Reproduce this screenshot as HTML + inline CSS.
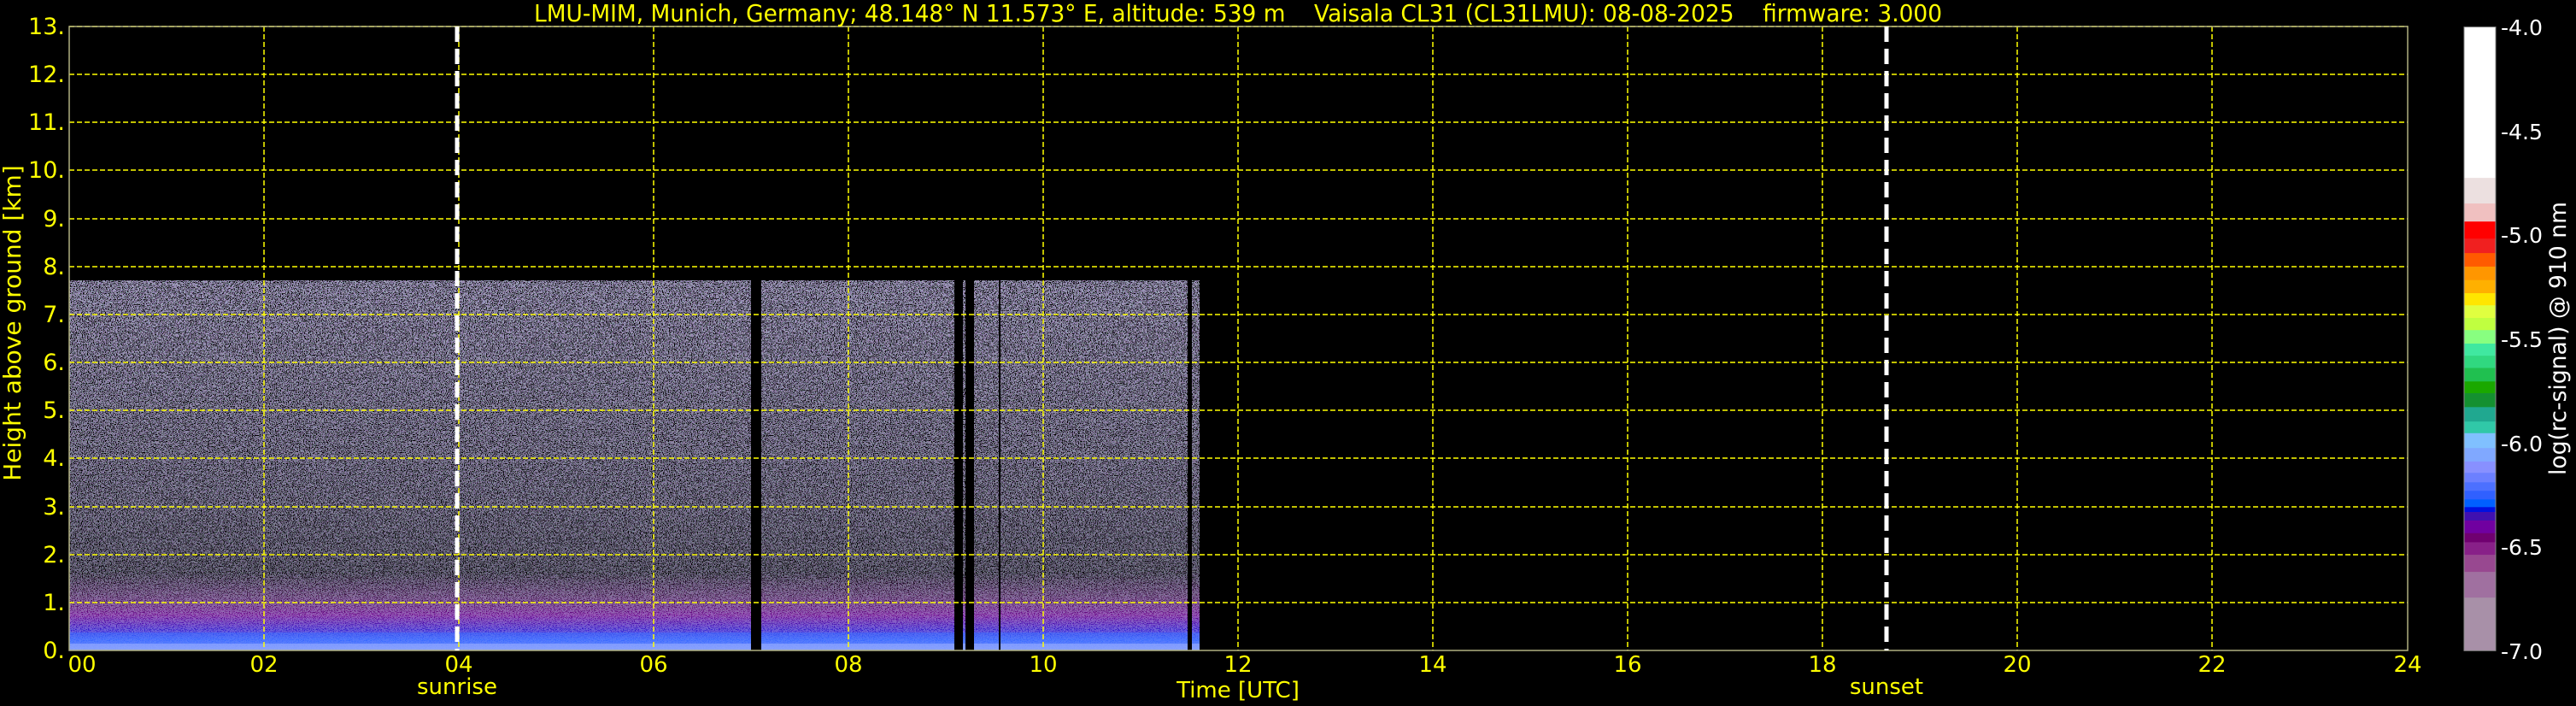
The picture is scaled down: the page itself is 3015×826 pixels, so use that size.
<!DOCTYPE html>
<html><head><meta charset="utf-8"><style>
html,body{margin:0;padding:0;background:#000;width:3015px;height:826px;overflow:hidden}
svg{display:block}
text{font-family:"DejaVu Sans","Liberation Sans",sans-serif}
</style></head><body>
<svg width="3015" height="826" viewBox="0 0 3015 826" xmlns="http://www.w3.org/2000/svg">
<defs>
<filter id="nz" x="0" y="0" width="100%" height="100%" filterUnits="objectBoundingBox">
<feTurbulence type="fractalNoise" baseFrequency="0.85" numOctaves="1" seed="7"/>
<feComponentTransfer>
<feFuncR type="discrete" tableValues="0.2 0.45 0.6 0.65 0.8 1"/>
<feFuncG type="discrete" tableValues="0.15 0.35 0.45 0.7 0.9 1"/>
<feFuncB type="discrete" tableValues="0.4 0.7 0.85 1 0.8 1"/>
<feFuncA type="discrete" tableValues="0 0 0 1 1 0 0"/>
</feComponentTransfer>
</filter>
<linearGradient id="dens" x1="0" y1="328" x2="0" y2="761" gradientUnits="userSpaceOnUse">
<stop offset="0" stop-color="#fff" stop-opacity="0.75"/>
<stop offset="0.6" stop-color="#fff" stop-opacity="0.62"/>
<stop offset="0.85" stop-color="#fff" stop-opacity="0.5"/>
<stop offset="1" stop-color="#fff" stop-opacity="0.3"/>
</linearGradient>
<mask id="m" maskUnits="userSpaceOnUse" x="0" y="0" width="3015" height="826"><rect x="81" y="328" width="1323" height="433" fill="url(#dens)"/></mask>
<linearGradient id="bl" x1="0" y1="670" x2="0" y2="761" gradientUnits="userSpaceOnUse">
<stop offset="0" stop-color="#7a2a8a" stop-opacity="0"/>
<stop offset="0.3" stop-color="#7a2a8a" stop-opacity="0.5"/>
<stop offset="0.55" stop-color="#6a0a8a"/>
<stop offset="0.75" stop-color="#3020d0"/>
<stop offset="0.87" stop-color="#3a6aff"/>
<stop offset="1" stop-color="#90a8ff"/>
</linearGradient>
</defs>

<rect x="81" y="670" width="1323" height="91" fill="url(#bl)"/>
<rect x="81" y="328" width="1323" height="433" filter="url(#nz)" mask="url(#m)"/>
<rect x="81" y="740" width="1323" height="21" fill="#3a6aff" opacity="0.5"/>
<rect x="81" y="753" width="1323" height="8" fill="#a8b8ff" opacity="0.5"/>
<g fill="#000">
<rect x="879" y="328" width="12" height="433"/>
<rect x="1117" y="328" width="10" height="433"/>
<rect x="1130" y="328" width="10" height="433"/>
<rect x="1169" y="328" width="2" height="433"/>
<rect x="1390" y="328" width="5" height="433"/>
</g>

<g stroke="#ffff00" stroke-width="1.5" stroke-dasharray="6 3" fill="none">
<path d="M81 705H2818M81 649H2818M81 593H2818M81 536H2818M81 480H2818M81 424H2818M81 368H2818M81 312H2818M81 256H2818M81 199H2818M81 143H2818M81 87H2818M81 31H2818"/>
<path d="M309 31V761M537 31V761M765 31V761M993 31V761M1221 31V761M1449 31V761M1677 31V761M1905 31V761M2133 31V761M2361 31V761M2589 31V761"/>
</g>
<rect x="81" y="31" width="2737" height="730" fill="none" stroke="#b0b080" stroke-width="1.5"/>

<g stroke="#fff" stroke-width="5" stroke-dasharray="18 8">
<path d="M535 31V761M2208 31V761"/>
</g>

<text x="625" y="25" font-size="28" fill="#ffff00" textLength="1648" lengthAdjust="spacingAndGlyphs" xml:space="preserve" style="white-space:pre">LMU-MIM, Munich, Germany; 48.148° N 11.573° E, altitude: 539 m    Vaisala CL31 (CL31LMU): 08-08-2025    firmware: 3.000</text>

<g font-size="27" fill="#ffff00" text-anchor="end">
<text x="76" y="770">0.</text><text x="76" y="714">1.</text><text x="76" y="658">2.</text><text x="76" y="602">3.</text><text x="76" y="545">4.</text><text x="76" y="489">5.</text><text x="76" y="433">6.</text><text x="76" y="377">7.</text><text x="76" y="321">8.</text><text x="76" y="265">9.</text><text x="76" y="208">10.</text><text x="76" y="152">11.</text><text x="76" y="96">12.</text><text x="76" y="40">13.</text>
</g>
<text transform="translate(24,378) rotate(-90)" font-size="28" fill="#ffff00" text-anchor="middle">Height above ground [km]</text>

<g font-size="26" fill="#ffff00" text-anchor="middle">
<text x="96" y="786">00</text><text x="309" y="786">02</text><text x="537" y="786">04</text><text x="765" y="786">06</text><text x="993" y="786">08</text><text x="1221" y="786">10</text><text x="1449" y="786">12</text><text x="1677" y="786">14</text><text x="1905" y="786">16</text><text x="2133" y="786">18</text><text x="2361" y="786">20</text><text x="2589" y="786">22</text><text x="2818" y="786">24</text>
<text x="535" y="812">sunrise</text>
<text x="1449" y="816">Time [UTC]</text>
<text x="2208" y="812">sunset</text>
</g>

<g>
<rect x="2884" y="31.6" width="37" height="177" fill="#ffffff"/>
<rect x="2884" y="208.1" width="37" height="30.5" fill="#ece0e0"/>
<rect x="2884" y="238.1" width="37" height="21.5" fill="#f0c0c0"/>
<rect x="2884" y="259.2" width="37" height="20.5" fill="#ff0000"/>
<rect x="2884" y="279.2" width="37" height="17.5" fill="#f02020"/>
<rect x="2884" y="296.1" width="37" height="16.3" fill="#ff5a00"/>
<rect x="2884" y="311.9" width="37" height="16.3" fill="#ff9600"/>
<rect x="2884" y="327.7" width="37" height="15.8" fill="#ffb000"/>
<rect x="2884" y="343" width="37" height="14.7" fill="#ffe600"/>
<rect x="2884" y="357.2" width="37" height="15.3" fill="#e0ff40"/>
<rect x="2884" y="372" width="37" height="14.7" fill="#c0ff40"/>
<rect x="2884" y="386.2" width="37" height="16.3" fill="#88ff80"/>
<rect x="2884" y="402" width="37" height="14.7" fill="#40e8a0"/>
<rect x="2884" y="416.2" width="37" height="14.8" fill="#30d880"/>
<rect x="2884" y="430.5" width="37" height="16.3" fill="#20c050"/>
<rect x="2884" y="446.3" width="37" height="14.2" fill="#1aa800"/>
<rect x="2884" y="460" width="37" height="16.8" fill="#149030"/>
<rect x="2884" y="476.3" width="37" height="17.4" fill="#20a890"/>
<rect x="2884" y="493.2" width="37" height="14.1" fill="#30c8a8"/>
<rect x="2884" y="506.8" width="37" height="17.9" fill="#80c0ff"/>
<rect x="2884" y="524.2" width="37" height="16.3" fill="#80a8ff"/>
<rect x="2884" y="540" width="37" height="13.7" fill="#8890ff"/>
<rect x="2884" y="553.2" width="37" height="11.6" fill="#6c80ff"/>
<rect x="2884" y="564.3" width="37" height="10.5" fill="#4c70ff"/>
<rect x="2884" y="574.3" width="37" height="10.5" fill="#3060ff"/>
<rect x="2884" y="584.3" width="37" height="9.5" fill="#0060ff"/>
<rect x="2884" y="593.3" width="37" height="6.2" fill="#0010e0"/>
<rect x="2884" y="599" width="37" height="10.5" fill="#4010b0"/>
<rect x="2884" y="609" width="37" height="15.3" fill="#7000a0"/>
<rect x="2884" y="623.8" width="37" height="11.1" fill="#700070"/>
<rect x="2884" y="634.4" width="37" height="15.2" fill="#882088"/>
<rect x="2884" y="649.1" width="37" height="20.5" fill="#984890"/>
<rect x="2884" y="669.1" width="37" height="30.6" fill="#a070a0"/>
<rect x="2884" y="699.2" width="37" height="62.1" fill="#a890a8"/>
<rect x="2884" y="31.6" width="37" height="729.7" fill="none" stroke="#888" stroke-width="1"/>
</g>
<g font-size="25" fill="#ffffff">
<text x="2927" y="41" textLength="49" lengthAdjust="spacingAndGlyphs">-4.0</text>
<text x="2927" y="163" textLength="49" lengthAdjust="spacingAndGlyphs">-4.5</text>
<text x="2927" y="284" textLength="49" lengthAdjust="spacingAndGlyphs">-5.0</text>
<text x="2927" y="406" textLength="49" lengthAdjust="spacingAndGlyphs">-5.5</text>
<text x="2927" y="528" textLength="49" lengthAdjust="spacingAndGlyphs">-6.0</text>
<text x="2927" y="649" textLength="49" lengthAdjust="spacingAndGlyphs">-6.5</text>
<text x="2927" y="771" textLength="49" lengthAdjust="spacingAndGlyphs">-7.0</text>
</g>
<text transform="translate(3003,396) rotate(-90)" font-size="27" fill="#ffffff" text-anchor="middle" textLength="320" lengthAdjust="spacingAndGlyphs">log(rc-signal) @ 910 nm</text>
</svg>
</body></html>
